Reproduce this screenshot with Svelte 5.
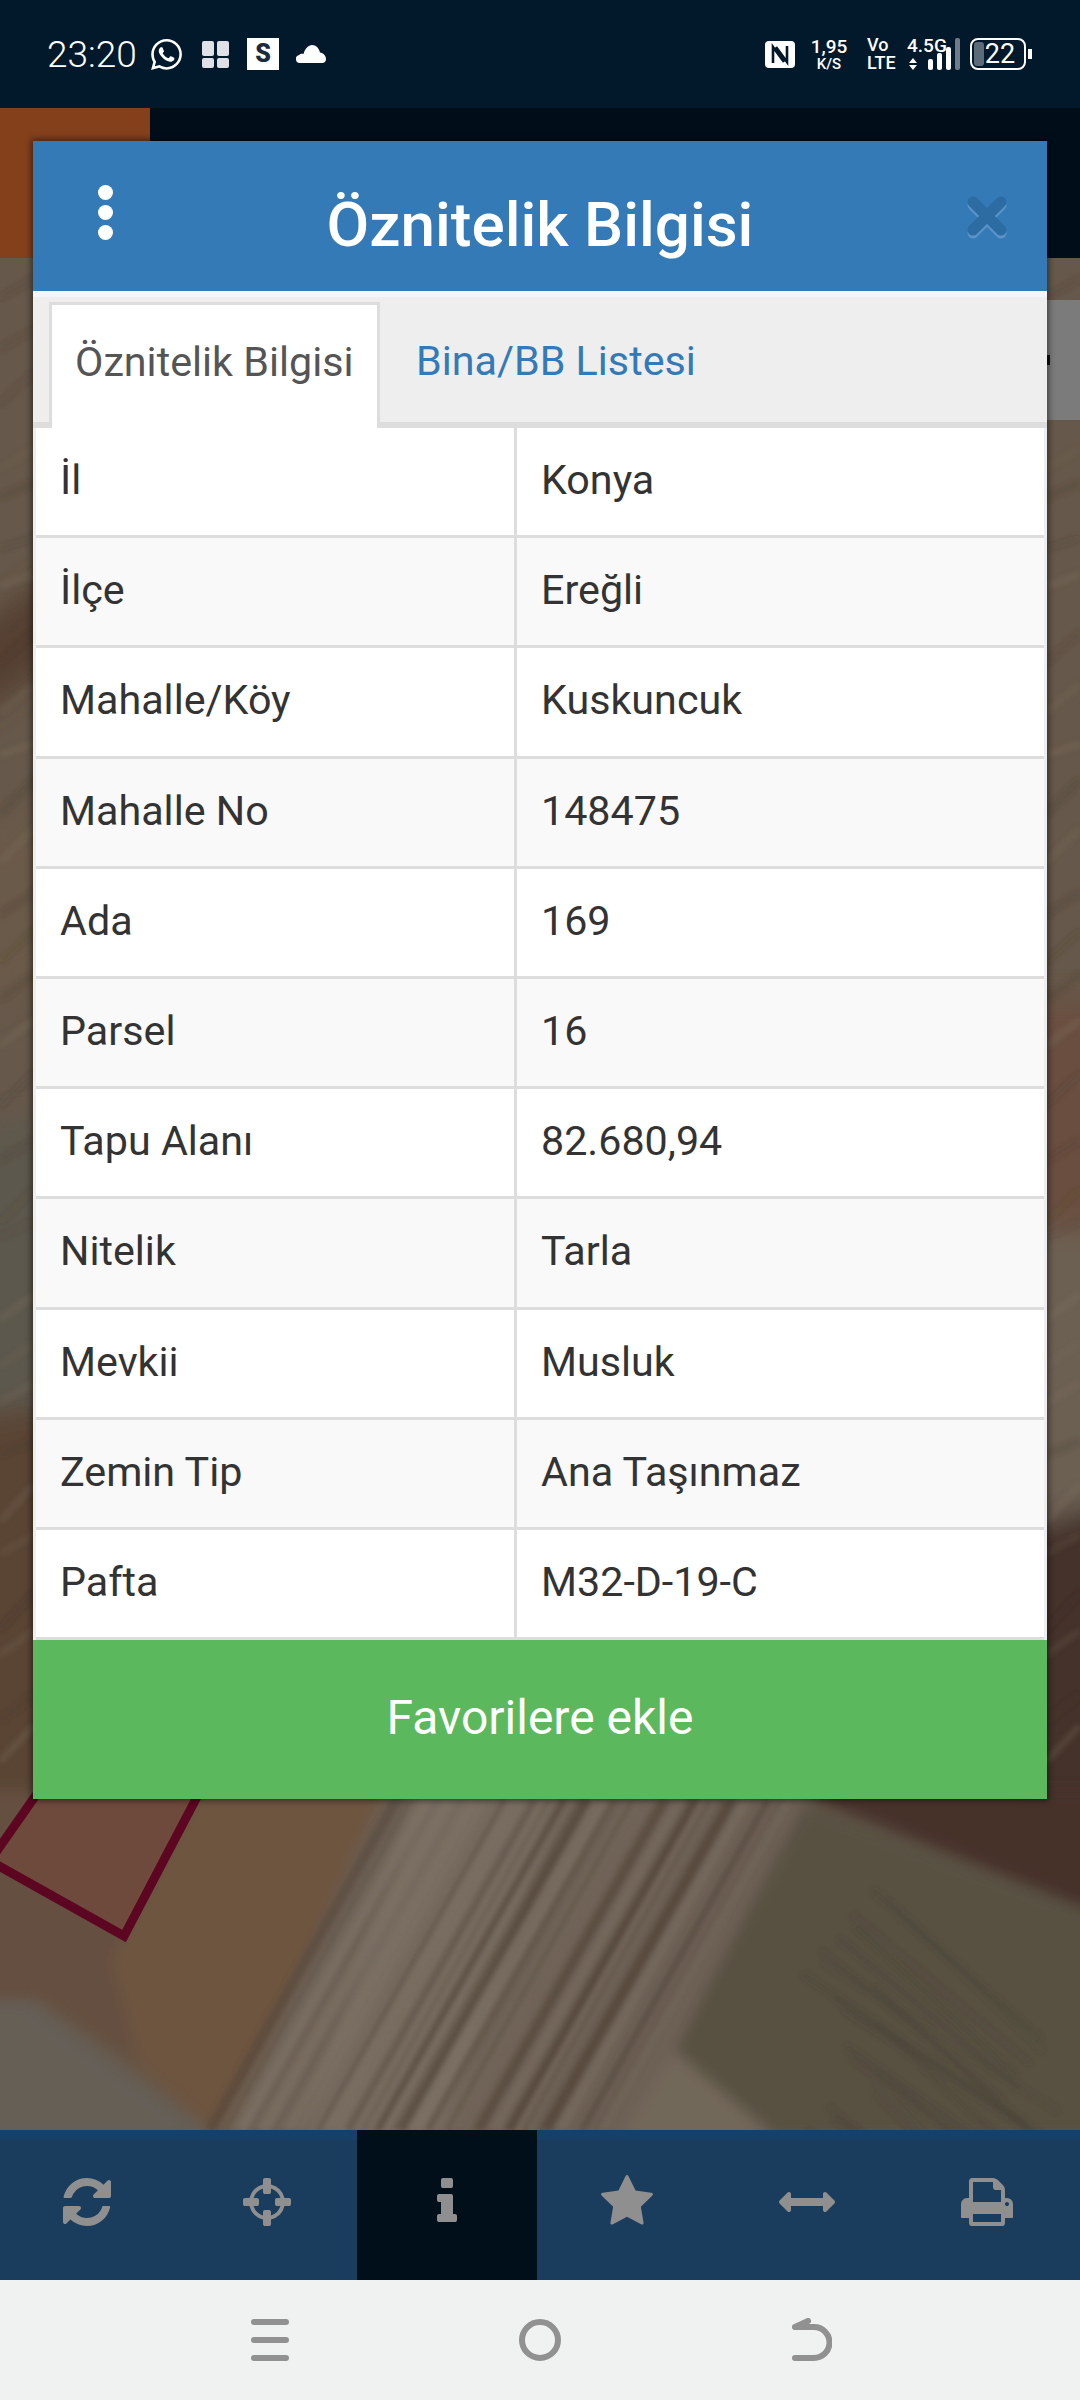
<script>
	const rows = [
		['İl', 'Konya'],
		['İlçe', 'Ereğli'],
		['Mahalle/Köy', 'Kuskuncuk'],
		['Mahalle No', '148475'],
		['Ada', '169'],
		['Parsel', '16'],
		['Tapu Alanı', '82.680,94'],
		['Nitelik', 'Tarla'],
		['Mevkii', 'Musluk'],
		['Zemin Tip', 'Ana Taşınmaz'],
		['Pafta', 'M32-D-19-C']
	]

	const navIcons = [
		{ d: 'M1639 1056q0 5-1 7-64 268-268 434.5t-478 166.5q-146 0-282.5-55t-243.5-157l-129 129q-19 19-45 19t-45-19-19-45v-448q0-26 19-45t45-19h448q26 0 45 19t19 45-19 45l-137 137q71 66 161 102t187 36q134 0 250-65t186-179q11-17 53-117 8-23 30-23h192q13 0 22.5 9.5t9.5 22.5zm25-800v448q0 26-19 45t-45 19h-448q-26 0-45-19t-19-45 19-45l138-138q-148-137-349-137-134 0-250 65t-186 179q-11 17-53 117-8 23-30 23h-199q-13 0-22.5-9.5t-9.5-22.5v-7q65-268 270-434.5t480-166.5q146 0 284 55.5t245 156.5l130-129q19-19 45-19t45 19 19 45z' },
		{ box: '-128 0 1792 1792', d: 'M1197 1024h-109q-26 0-45-19t-19-45v-128q0-26 19-45t45-19h109q-32-108-112.5-188.5t-188.5-112.5v109q0 26-19 45t-45 19h-128q-26 0-45-19t-19-45v-109q-108 32-188.5 112.5t-112.5 188.5h109q26 0 45 19t19 45v128q0 26-19 45t-45 19h-109q32 108 112.5 188.5t188.5 112.5v-109q0-26 19-45t45-19h128q26 0 45 19t19 45v109q108-32 188.5-112.5t112.5-188.5zm339-192v128q0 26-19 45t-45 19h-143q-37 161-154.5 278.5t-278.5 154.5v143q0 26-19 45t-45 19h-128q-26 0-45-19t-19-45v-143q-161-37-278.5-154.5t-154.5-278.5h-143q-26 0-45-19t-19-45v-128q0-26 19-45t45-19h143q37-161 154.5-278.5t278.5-154.5v-143q0-26 19-45t45-19h128q26 0 45 19t19 45v143q161 37 278.5 154.5t154.5 278.5h143q26 0 45 19t19 45z' },
		{ d: 'M1216 1344v128q0 26-19 45t-45 19h-512q-26 0-45-19t-19-45v-128q0-26 19-45t45-19h64v-384h-64q-26 0-45-19t-19-45v-128q0-26 19-45t45-19h384q26 0 45 19t19 45v576h64q26 0 45 19t19 45zm-128-1152v192q0 26-19 45t-45 19h-256q-26 0-45-19t-19-45v-192q0-26 19-45t45-19h256q26 0 45 19t19 45z', active: true },
		{ d: 'M1728 647q0 22-26 48l-363 354 86 500q1 7 1 20 0 21-10.5 35.5t-30.5 14.5q-19 0-40-12l-449-236-449 236q-22 12-40 12-21 0-31.5-14.5t-10.5-35.5q0-6 2-20l86-500-364-354q-25-27-25-48 0-37 56-46l502-73 225-455q19-41 49-41t49 41l225 455 502 73q56 9 56 46z' },
		{ d: 'M1792 896q0 26-19 45l-256 256q-19 19-45 19t-45-19-19-45v-128h-1024v128q0 26-19 45t-45 19-45-19l-256-256q-19-19-19-45t19-45l256-256q19-19 45-19t45 19 19 45v128h1024v-128q0-26 19-45t45-19 45 19l256 256q19 19 19 45z' },
		{ d: 'M448 1536h896v-256h-896v256zm0-640h896v-384h-160q-40 0-68-28t-28-68v-160h-640v640zm1152 64q0-26-19-45t-45-19-45 19-19 45 19 45 45 19 45-19 19-45zm128 0v416q0 13-9.5 22.5t-22.5 9.5h-224v160q0 40-28 68t-68 28h-960q-40 0-68-28t-28-68v-160h-224q-13 0-22.5-9.5t-9.5-22.5v-416q0-79 56.5-135.5t135.5-56.5h64v-544q0-40 28-68t68-28h672q40 0 88 20t76 48l152 152q28 28 48 76t20 88v256h64q79 0 135.5 56.5t56.5 135.5z' }
	]

	// fake the furrows of the aerial photo
	function rnd(seed) {
		const v = Math.sin(seed * 127.1) * 43758.5453
		return v - Math.floor(v)
	}
	const furrows = Array.from({ length: 80 }, (_, i) => {
		const x = 392 + rnd(i + 1) * 400
		return {
			x1: x,
			x2: x - 186,
			w: 2 + rnd(i + 40) * 8,
			c: rnd(i + 90) > 0.45 ? '#524539' : '#7f7366',
			o: 0.2 + rnd(i + 7) * 0.35
		}
	})
	const fieldLines = Array.from({ length: 24 }, (_, i) => {
		const y = 1840 + i * 12
		return { x1: 800 + rnd(i + 3) * 100, y1: y + 50, x2: 1000 + rnd(i + 5) * 80, y2: y + 200, o: 0.08 + rnd(i + 11) * 0.15 }
	})
	const sideBands = Array.from({ length: 30 }, (_, i) => {
		const y = 270 + i * 50 + rnd(i + 21) * 30
		return { y, d: 10 + rnd(i + 31) * 30, o: 0.08 + rnd(i + 51) * 0.15, c: rnd(i + 61) > 0.5 ? '#3f3228' : '#8a7c6c' }
	})
</script>

<div class="screen">
	<header class="status">
		<span class="time">23:20</span>
		<svg class="wa" viewBox="0 0 24 24"><path fill="#fff" d="M17.472 14.382c-.297-.149-1.758-.867-2.03-.967-.273-.099-.471-.148-.67.15-.197.297-.767.966-.94 1.164-.173.199-.347.223-.644.075-.297-.15-1.255-.463-2.39-1.475-.883-.788-1.48-1.761-1.653-2.059-.173-.297-.018-.458.13-.606.134-.133.298-.347.446-.52.149-.174.198-.298.298-.497.099-.198.05-.371-.025-.52-.075-.149-.669-1.612-.916-2.207-.242-.579-.487-.5-.669-.51-.173-.008-.371-.01-.57-.01-.198 0-.52.074-.792.372-.272.297-1.04 1.016-1.04 2.479 0 1.462 1.065 2.875 1.213 3.074.149.198 2.096 3.2 5.077 4.487.709.306 1.262.489 1.694.625.712.227 1.36.195 1.871.118.571-.085 1.758-.719 2.006-1.413.248-.694.248-1.289.173-1.413-.074-.124-.272-.198-.57-.347m-5.421 7.403h-.004a9.87 9.87 0 01-5.031-1.378l-.361-.214-3.741.982.998-3.648-.235-.374a9.86 9.86 0 01-1.51-5.26c.001-5.45 4.436-9.884 9.888-9.884 2.64 0 5.122 1.03 6.988 2.898a9.825 9.825 0 012.893 6.994c-.003 5.45-4.437 9.884-9.885 9.884m8.413-18.297A11.815 11.815 0 0012.05 0C5.495 0 .16 5.335.157 11.892c0 2.096.547 4.142 1.588 5.945L.057 24l6.305-1.654a11.882 11.882 0 005.683 1.448h.005c6.554 0 11.89-5.335 11.893-11.893a11.821 11.821 0 00-3.48-8.413z"/></svg>
		<svg class="tiles" viewBox="0 0 27 27">
			<rect x="0" y="0" width="12" height="15" rx="2" fill="#dfe1e6"/>
			<rect x="15" y="0" width="12" height="15" rx="2" fill="#dfe1e6"/>
			<rect x="0" y="17" width="12" height="10" rx="2" fill="#dfe1e6"/>
			<rect x="15" y="17" width="12" height="10" rx="2" fill="#dfe1e6"/>
		</svg>
		<span class="sbox">S</span>
		<svg class="cloud" viewBox="0 0 30 18"><path fill="#fff" d="M4 18a4 4 0 0 1-1-7.9C4 9 6 8.6 7.5 9 9 3.500 12.500 0 16 0c4 0 7 3 8 7.500 3.500.3 6 3.500 6 6.500 0 2.500-1.500 4-4 4z"/></svg>
		<span class="spacer"></span>
		<svg class="nfc" viewBox="0 0 30 27">
			<rect width="30" height="27" rx="4" fill="#fff"/>
			<path d="M8 22V6l11 15M22 5v16L11 6" fill="none" stroke="#02182b" stroke-width="2.600"/>
		</svg>
		<span class="speed"><b>1,95</b><small>K/S</small></span>
		<span class="volte"><b>Vo</b><b>LTE</b></span>
		<span class="net">
			<b>4.5G</b>
			<svg viewBox="0 0 54 33">
				<path d="M2 25l4-5 4 5zM2 27l4 5 4-5z" fill="#fff"/>
				<rect x="21" y="21" width="5" height="11" rx="2" fill="#fff"/>
				<rect x="30" y="15" width="5" height="17" rx="2" fill="#fff"/>
				<rect x="39" y="9" width="5" height="23" rx="2" fill="#fff"/>
				<rect x="48" y="0" width="5" height="32" rx="2" fill="#6f7b86"/>
			</svg>
		</span>
		<span class="battery"><i></i><em>22</em></span>
		<span class="nub"></span>
	</header>

	<main class="map">
		<svg class="photo" viewBox="0 108 1080 2022" preserveAspectRatio="none">
			<defs>
				<filter id="wide"><feGaussianBlur stdDeviation="14"/></filter>
				<filter id="soft"><feGaussianBlur stdDeviation="7"/></filter>
				<filter id="fine"><feGaussianBlur stdDeviation="2.500"/></filter>
			</defs>
			<rect x="0" y="108" width="1080" height="2022" fill="#66584a"/>
			<g filter="url(#wide)">
				<!-- left edge -->
				<polygon points="-40,640 70,560 70,650 -40,730" fill="#553f30"/>
				<polygon points="-40,850 70,800 70,960 -40,1020" fill="#6b5a4a"/>
				<polygon points="-40,1130 70,1110 70,1400 -40,1420" fill="#5d584e"/>
				<polygon points="-40,1420 70,1400 70,1820 -40,1860" fill="#5a4535"/>
				<!-- right edge -->
				<polygon points="1020,1000 1120,1000 1120,1230 1020,1230" fill="#6a5040"/>
				<polygon points="1020,1230 1120,1230 1120,1510 1020,1530" fill="#6c6052"/>
				<polygon points="1020,1530 1120,1500 1120,1830 1020,1830" fill="#45302a"/>
			</g>
			<g filter="url(#soft)">
				<!-- fields below the modal -->
				<polygon points="-20,1790 390,1790 225,2140 130,2060 40,2000 -20,2000" fill="#655040"/>
				<polygon points="200,1790 386,1790 222,2140 140,2070 110,1960" fill="#6d5441"/>
				<polygon points="-20,2000 30,2000 130,2075 220,2140 -20,2140" fill="#655f57"/>
				<polygon points="386,1790 810,1790 702,1996 675,2051 620,2140 220,2140" fill="#6d6154"/>
				<polygon points="806,1790 1100,1790 1100,1915 826,1805" fill="#47302a"/>
				<polygon points="806,1803 1100,1915 1100,2140 778,2140 675,2051 702,1996" fill="#585143"/>
				<polygon points="620,2140 675,2051 778,2140" fill="#72675a"/>
				<polygon points="420,1790 560,1790 440,2140 300,2140" fill="#766b5e"/>
			</g>
			<g filter="url(#fine)">
				{#each furrows as f}
					<line x1={f.x1} y1="1800" x2={f.x2} y2="2130" stroke={f.c} stroke-width={f.w} opacity={f.o}/>
				{/each}
				{#each fieldLines as l}
					<line x1={l.x1} y1={l.y1} x2={l.x2} y2={l.y2} stroke="#3f3b30" stroke-width="6" opacity={l.o}/>
				{/each}
				{#each sideBands as b}
					<line x1="0" y1={b.y + b.d} x2="34" y2={b.y} stroke={b.c} stroke-width="7" opacity={b.o}/>
					<line x1="1046" y1={b.y + b.d} x2="1080" y2={b.y} stroke={b.c} stroke-width="7" opacity={b.o}/>
				{/each}
			</g>
			<polygon points="-10,1860 124,1936 200,1790 34,1790" fill="#8a3d2e" opacity="0.25"/>
			<polyline points="-10,1861 124,1936 198,1795" fill="none" stroke="#5c0622" stroke-width="9"/>
			<line x1="36" y1="1795" x2="-8" y2="1858" stroke="#5c0622" stroke-width="9"/>
		</svg>

		<div class="appbar">
			<div class="brand"></div>
		</div>
		<div class="sidetab"><span></span></div>

		<section class="modal">
			<div class="modal-head">
				<div class="dots"><i></i><i></i><i></i></div>
				<h2>Öznitelik Bilgisi</h2>
				<svg class="close" viewBox="0 0 44 46">
					<path d="M8 11l14 14 14-14M8 39l14-14 14 14" fill="none" stroke="#5a93c7" stroke-width="11" stroke-linecap="round" stroke-linejoin="round"/>
					<path d="M8 8l28 28M36 8L8 36" fill="none" stroke="#2d6ba3" stroke-width="11" stroke-linecap="round"/>
				</svg>
			</div>
			<div class="tabs">
				<div class="tab active">Öznitelik Bilgisi</div>
				<div class="tab">Bina/BB Listesi</div>
			</div>
			<div class="table">
				{#each rows as row, i}
					<div class="row" class:striped={i % 2 === 1}>
						<div class="key">{row[0]}</div>
						<div class="val">{row[1]}</div>
					</div>
				{/each}
			</div>
			<button class="fav">Favorilere ekle</button>
		</section>
	</main>

	<nav class="bottom">
		{#each navIcons as icon}
			<div class="nav-item" class:active={icon.active}>
				<svg viewBox={icon.box || '0 0 1792 1792'}><path d={icon.d}/></svg>
			</div>
		{/each}
	</nav>

	<footer class="sysnav">
		<svg class="menu" viewBox="0 0 38 42">
			<rect x="0" y="0" width="38" height="6" rx="3"/>
			<rect x="0" y="18" width="38" height="6" rx="3"/>
			<rect x="0" y="36" width="38" height="6" rx="3"/>
		</svg>
		<span class="home"></span>
		<svg class="back" viewBox="0 0 40 44">
			<path d="M3 40h19a15.500 15.500 0 0 0 0-31H3M3 9l13-6" fill="none" stroke="#919191" stroke-width="6" stroke-linecap="round"/>
		</svg>
	</footer>
</div>

<style>
	:global(body) {
		margin: 0;
		background: #000;
	}
	.screen {
		width: 1080px;
		height: 2400px;
		display: flex;
		flex-direction: column;
		overflow: hidden;
		font-family: Roboto, "Liberation Sans", sans-serif;
	}

	/* status bar */
	.status {
		height: 108px;
		flex: none;
		box-sizing: border-box;
		background: #02182b;
		color: #fff;
		display: flex;
		align-items: center;
		padding: 0 48px 0 47px;
	}
	.time {
		font-size: 37px;
		font-weight: 300;
		width: 92px;
		margin-right: 12px;
		white-space: nowrap;
	}
	.wa {
		width: 31px;
		height: 31px;
		margin-right: 20px;
		margin-top: 1px;
	}
	.tiles {
		width: 27px;
		height: 27px;
		margin-right: 18px;
	}
	.sbox {
		width: 32px;
		height: 32px;
		background: #fff;
		color: #1c2a3c;
		font-weight: 900;
		font-size: 25px;
		line-height: 32px;
		text-align: center;
		margin-right: 17px;
	}
	.cloud {
		width: 30px;
		height: 18px;
		margin-top: -1px;
	}
	.spacer {
		flex: 1;
	}
	.nfc {
		width: 30px;
		height: 27px;
		margin-right: 15px;
	}
	.speed,
	.volte {
		display: flex;
		flex-direction: column;
		align-items: center;
		font-weight: 500;
	}
	.speed {
		width: 38px;
		margin-right: 19px;
		white-space: nowrap;
	}
	.speed b {
		font-size: 19px;
		line-height: 20px;
		font-weight: 500;
	}
	.speed small {
		font-size: 15px;
		line-height: 15px;
	}
	.volte {
		align-items: flex-start;
		width: 30px;
		margin-right: 10px;
	}
	.volte b {
		font-size: 18px;
		line-height: 18px;
		font-weight: 500;
	}
	.net {
		width: 54px;
		height: 33px;
		position: relative;
		margin-right: 9px;
	}
	.net b {
		position: absolute;
		left: 0;
		top: -1px;
		font-size: 19px;
		line-height: 18px;
		font-weight: 500;
		z-index: 1;
	}
	.net svg {
		width: 54px;
		height: 33px;
		display: block;
	}
	.battery {
		width: 56px;
		height: 32px;
		box-sizing: border-box;
		border: 2.500px solid #fff;
		border-radius: 8px;
		position: relative;
		display: flex;
		align-items: center;
		justify-content: center;
	}
	.battery i {
		position: absolute;
		left: 2px;
		top: 2px;
		bottom: 2px;
		width: 10px;
		border-radius: 3px;
		background: #5d6b78;
	}
	.battery em {
		font-style: normal;
		font-size: 27px;
		font-weight: 400;
		position: relative;
		left: 2px;
	}
	.nub {
		width: 4px;
		height: 10px;
		background: #fff;
		margin-left: 2px;
	}

	/* map area */
	.map {
		flex: 1;
		position: relative;
		overflow: hidden;
	}
	.photo {
		position: absolute;
		inset: 0;
		width: 1080px;
		height: 2022px;
	}
	.appbar {
		position: relative;
		height: 150px;
		background: #010e1a;
	}
	.brand {
		width: 150px;
		height: 150px;
		background: #84401b;
	}
	.sidetab {
		position: absolute;
		left: 1047px;
		top: 192px;
		width: 33px;
		height: 120px;
		background: #7b7b7b;
	}
	.sidetab span {
		position: absolute;
		left: 0;
		top: 55px;
		width: 3px;
		height: 10px;
		background: #111;
	}

	/* dialog */
	.modal {
		position: absolute;
		left: 33px;
		top: 33px;
		width: 1014px;
		box-shadow: 0 0 6px 2px rgba(0, 0, 0, 0.45);
	}
	.modal-head {
		height: 150px;
		background: #337ab7;
		display: flex;
		align-items: center;
		justify-content: center;
		position: relative;
	}
	.modal-head h2 {
		margin: 18px 0 0;
		font-size: 62px;
		font-weight: 500;
		color: #fff;
		line-height: 1;
	}
	.dots {
		position: absolute;
		left: 65px;
		top: 44px;
		display: flex;
		flex-direction: column;
		gap: 5px;
	}
	.dots i {
		width: 15px;
		height: 15px;
		border-radius: 50%;
		background: #fff;
		display: block;
	}
	.close {
		position: absolute;
		left: 932px;
		top: 53px;
		width: 44px;
		height: 46px;
	}
	.tabs {
		height: 137px;
		box-sizing: border-box;
		background: #eee;
		border-top: 6px solid #f2f6fa;
		border-bottom: 6px solid #ddd;
		padding-left: 16px;
		display: flex;
		align-items: stretch;
	}
	.tab {
		font-size: 41.250px;
		color: #337ab7;
		padding: 3px 24px 0 36px;
		display: flex;
		align-items: center;
		white-space: nowrap;
	}
	.tab.active {
		width: 331px;
		box-sizing: border-box;
		background: #fff;
		color: #555;
		border: 3px solid #ddd;
		border-bottom: none;
		padding: 0 0 9px 23px;
		margin-top: 5px;
		margin-bottom: -6px;
		position: relative;
	}
	.table {
		padding: 0 3px;
		background: #eee;
	}
	.row {
		height: 110.200px;
		box-sizing: border-box;
		display: grid;
		grid-template-columns: 481px 1fr;
		background: #fff;
		border-bottom: 3px solid #ddd;
		font-size: 41.250px;
		color: #333;
	}
	.row.striped {
		background: #f9f9f9;
	}
	.key,
	.val {
		display: flex;
		align-items: center;
		padding-bottom: 3px;
		box-sizing: border-box;
	}
	.key {
		padding-left: 24px;
		border-right: 3px solid #ddd;
	}
	.val {
		padding-left: 24px;
	}
	.fav {
		display: block;
		width: 100%;
		height: 159px;
		border: none;
		background: #5cb85c;
		color: #fff;
		font-family: inherit;
		font-size: 48px;
		font-weight: 400;
		padding: 0 0 4px;
	}

	/* bottom toolbar */
	.bottom {
		height: 150px;
		flex: none;
		box-sizing: border-box;
		background: #1a3c5d;
		border-top: 10px solid #163f69;
		display: flex;
		margin-left: -3px;
		width: 1083px;
	}
	.nav-item {
		width: 180px;
		display: flex;
		align-items: center;
		justify-content: center;
		padding-bottom: 16px;
		box-sizing: border-box;
	}
	.nav-item.active {
		background: #010f1a;
		margin-top: -10px;
		padding-bottom: 6px;
	}
	.nav-item svg {
		width: 56px;
		height: 56px;
		fill: #8f8f8f;
	}

	/* android nav */
	.sysnav {
		height: 120px;
		flex: none;
		background: #f0f1f1;
		display: flex;
		align-items: center;
		padding-left: 251px;
	}
	.menu {
		width: 38px;
		height: 42px;
		fill: #919191;
		margin-right: 230px;
	}
	.home {
		width: 42px;
		height: 42px;
		box-sizing: border-box;
		border: 6px solid #919191;
		border-radius: 50%;
		margin-right: 231px;
	}
	.back {
		width: 40px;
		height: 44px;
	}
</style>
